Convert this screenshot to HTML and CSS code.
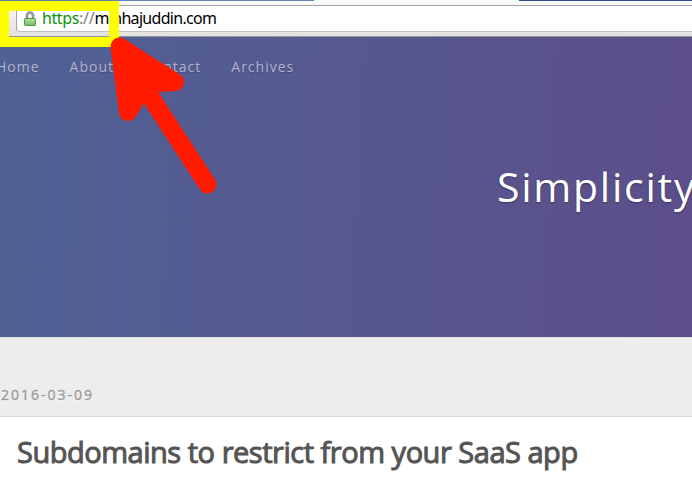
FILE: index.html
```html
<!DOCTYPE html>
<html lang="en">
<head>
<meta charset="utf-8">
<title>Simplicity</title>
<link rel="stylesheet" href="styles.css">
</head>
<body>
<div class="browser">
  <div class="tabs"><span class="tab-left"></span><span class="tab-active"></span><span class="tab-right"></span></div>
  <div class="toolbar">
    <div class="address">
      <svg class="lock" width="12" height="16" viewBox="0 0 12 16">
        <defs><linearGradient id="g" x1="0" y1="0" x2="0" y2="1"><stop offset="0" stop-color="#b5e2a4"/><stop offset="1" stop-color="#70bd5c"/></linearGradient></defs>
        <path d="M3 8V4.500a3 3 0 0 1 6 0V8" fill="none" stroke="#777" stroke-width="2.600"/>
        <path d="M3 8V4.500a3 3 0 0 1 6 0V8" fill="none" stroke="#ccc" stroke-width=".8"/>
        <rect x=".5" y="7.500" width="11" height="7" rx=".8" fill="url(#g)" stroke="#549446"/>
      </svg>
      <span class="url"><span class="scheme">https</span><span class="slashes">://</span>minhajuddin.com</span>
    </div>
  </div>
</div>
<header class="hero">
  <nav class="nav"><a>Home</a><a>About</a><a>Contact</a><a>Archives</a></nav>
  <h1 class="brand">Simplicity</h1>
</header>
<div class="datebar"><time>2016-03-09</time></div>
<main class="post"><h2>Subdomains to restrict from your SaaS app</h2></main>
<svg class="annotation" width="692" height="494" viewBox="0 0 692 494">
  <path d="M0 1H119V47H0ZM9 11V37H109V11Z" fill="#ff0" fill-rule="evenodd"/>
  <g fill="#ff1a00" stroke="#ff1a00" stroke-width="18" stroke-linecap="round" stroke-linejoin="round">
    <path d="M119.500 46.500L175 82L145 84L128 112Z"/>
    <path d="M137 76L207.500 184.500"/>
  </g>
</svg>
</body>
</html>
```
FILE: styles.css
```css
* { box-sizing: border-box; }
body { margin: 0; width: 692px; height: 494px; overflow: hidden; position: relative; background: #fff; font-family: "Open Sans", "Noto Sans", sans-serif; }
.browser { height: 37px; display: flex; flex-direction: column; }
.tabs { display: flex; height: 1px; }
.tab-left { width: 314px; background: #6482b2; }
.tab-active { width: 205px; background: #f8f8f8; }
.tab-right { flex: 1; background: #2e4b8c; }
.toolbar { height: 36px; padding: 4px 0 4px 16px; background: linear-gradient(#fafafa, #e2e2e2); border-bottom: 1px solid #959595; }
.address { height: 27px; display: flex; align-items: flex-start; padding-left: 6px; background: #fff; border: 1px solid #a5a2a2; border-right: 0; border-bottom-color: #c3c3c3; border-radius: 4px 0 0 4px; }
.lock { margin: 5px 0 0 1px; }
.url { margin-left: 6px; margin-top: 1px; font: 16px/22px "Noto Sans", sans-serif; letter-spacing: -.7px; color: #000; white-space: nowrap; }
.scheme { color: #0a930a; letter-spacing: -.4px; }
.slashes { color: #808080; letter-spacing: -.2px; }
.hero { height: 300px; background: linear-gradient(93deg, #506295, #5c4e8b); overflow: hidden; }
.nav { display: flex; gap: 30px; margin-left: -4px; padding-top: 20px; font-size: 14px; line-height: 20px; letter-spacing: 1px; color: #b2b4cf; text-shadow: 0 1px 1px rgba(0,0,0,.2); }
.brand { margin: 81px 0 0 497px; font-size: 41px; line-height: 56px; font-weight: 400; letter-spacing: 1.75px; color: #fff; text-shadow: 0 1px 2px rgba(0,0,0,.35); white-space: nowrap; }
.datebar { height: 80px; padding: 47px 0 0 1px; background: #ededed; border-top: 1px solid #e2e2e2; border-bottom: 1px solid #d9d9d9; font-size: 14px; line-height: 20px; letter-spacing: 2px; color: #999; text-shadow: 0 1px #fff; }
.datebar time { -webkit-text-stroke: .35px #999; }
.post h2 { margin: 15px 0 0 17px; font-size: 29px; line-height: 40px; font-weight: 400; letter-spacing: -.48px; color: #555; -webkit-text-stroke: 1px #555; white-space: nowrap; }
.annotation { position: absolute; inset: 0; }
```
